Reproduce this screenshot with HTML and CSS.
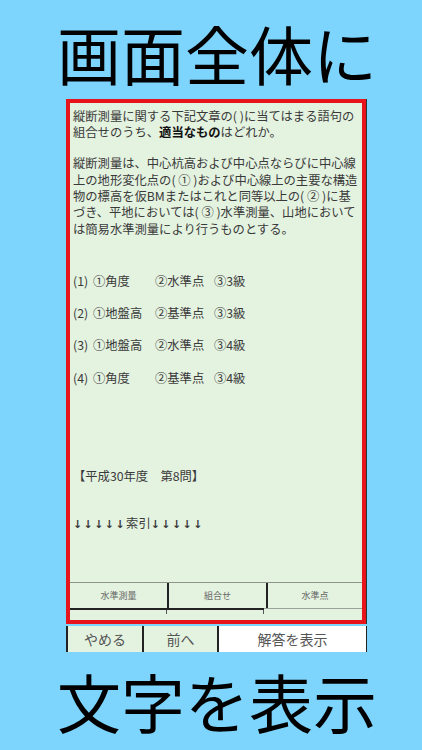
FILE: index.html
```html
<!DOCTYPE html>
<html lang="ja">
<head>
<meta charset="utf-8">
<title>画面全体に文字を表示</title>
<link rel="stylesheet" href="styles.css">
</head>
<body>
<div class="page">
  <header class="caption caption-top">画面全体に</header>
  <main class="frame">
    <div class="content">
      <p class="q">縦断測量に関する下記文章の( )に当てはまる語句の<br>組合せのうち、<b>適当なもの</b>はどれか。</p>
      <p class="q2">縦断測量は、中心杭高および中心点ならびに中心線<br>上の地形変化点の( ① )および中心線上の主要な構造<br>物の標高を仮BMまたはこれと同等以上の( ② )に基<br>づき、平地においては( ③ )水準測量、山地において<br>は簡易水準測量により行うものとする。</p>
      <ol class="opts">
        <li class="opt first"><span class="no">(1)</span><span class="c1">①角度</span><span class="c2">②水準点</span><span>③3級</span></li>
        <li class="opt"><span class="no">(2)</span><span class="c1">①地盤高</span><span class="c2">②基準点</span><span>③3級</span></li>
        <li class="opt"><span class="no">(3)</span><span class="c1">①地盤高</span><span class="c2">②水準点</span><span>③4級</span></li>
        <li class="opt"><span class="no">(4)</span><span class="c1">①角度</span><span class="c2">②基準点</span><span>③4級</span></li>
      </ol>
      <p class="year">【平成30年度　第8問】</p>
      <p class="index"><span class="arrows">↓↓↓↓↓</span>索引<span class="arrows">↓↓↓↓↓</span></p>
    </div>
    <div class="tags">
      <div class="tag">水準測量</div>
      <div class="tag">組合せ</div>
      <div class="tag last">水準点</div>
    </div>
    <div class="tags-foot">
      <div class="foot dark"></div>
      <div class="foot dark"></div>
      <div class="foot"></div>
    </div>
  </main>
  <nav class="buttons">
    <div class="btn quit">やめる</div>
    <div class="btn prev">前へ</div>
    <div class="btn answer">解答を表示</div>
  </nav>
  <footer class="caption caption-bottom">文字を表示</footer>
</div>
</body>
</html>
```
FILE: styles.css
```css
html, body {
  margin: 0;
  padding: 0;
}
body {
  background: #7dd5fd;
  font-family: "Noto Sans CJK JP", "Noto Sans", sans-serif;
}
.page {
  width: 422px;
  height: 750px;
  display: flex;
  flex-direction: column;
  overflow: hidden;
}
.caption {
  display: flex;
  align-items: center;
  justify-content: center;
  font-size: 64px;
  font-weight: 400;
  color: #000;
  line-height: 1;
  padding-left: 12px;
}
.caption-top {
  height: 99px;
  padding-top: 4px;
  box-sizing: border-box;
}
.caption-bottom {
  flex: 1;
  padding-bottom: 3px;
  box-sizing: border-box;
}
.frame {
  margin-left: 66px;
  width: 300px;
  height: 525px;
  box-sizing: border-box;
  border: 4px solid #e8141c;
  background: #e4f2e0;
  box-shadow: 1px 0 0 #333;
  display: flex;
  flex-direction: column;
}
.content {
  flex: 1;
  padding: 4.8px 0 0 3px;
  font-size: 12.3px;
  line-height: 16.4px;
  color: #3a3a3a;
  white-space: nowrap;
}
.content p, .content ol {
  margin: 0;
  padding: 0;
}
.content b {
  color: #111;
  font-weight: 700;
}
.q2 {
  margin-top: 14.6px !important;
}
.opts {
  list-style: none;
  margin-top: 35.6px !important;
}
.opt {
  display: flex;
  margin-top: 15.9px;
}
.opt.first {
  margin-top: 0;
}
.no {
  width: 20px;
}
.c1 {
  width: 62px;
}
.c2 {
  width: 59px;
}
.year {
  margin-top: 81.6px !important;
}
.index {
  margin-top: 30.6px !important;
}
.arrows {
  font-family: "DejaVu Sans", sans-serif;
  font-variant-emoji: text;
  font-weight: 700;
  color: #3a3a3a;
  letter-spacing: 1.4px;
  font-size: 11px;
}
.tags {
  display: flex;
  height: 26px;
  border-top: 1px solid #8d948c;
  box-sizing: border-box;
}
.tag {
  width: 97px;
  border-right: 2px solid #222;
  display: flex;
  align-items: center;
  justify-content: center;
  font-size: 9px;
  color: #666;
}
.tag.last {
  flex: 1;
  border-right: none;
}
.tags-foot {
  display: flex;
  height: 12px;
}
.foot {
  width: 97px;
  border-top: 2px solid #222;
  box-sizing: border-box;
  position: relative;
}
.foot.dark::after {
  content: "";
  position: absolute;
  right: 0;
  top: 0;
  width: 1px;
  height: 4px;
  background: #555;
}
.foot:last-child {
  flex: 1;
  border-top: 1px solid #9aa198;
}
.buttons {
  display: flex;
  margin: 2px 0 0 66px;
  width: 301px;
  height: 26px;
}
.btn {
  display: flex;
  align-items: center;
  justify-content: center;
  font-size: 14px;
  color: #555;
  box-sizing: border-box;
  border-left: 2px solid #222;
}
.quit {
  width: 76px;
  background: #e4f2e0;
}
.prev {
  width: 75px;
  background: #e4f2e0;
}
.answer {
  flex: 1;
  background: #fff;
  border-right: 1px solid #222;
}
```
